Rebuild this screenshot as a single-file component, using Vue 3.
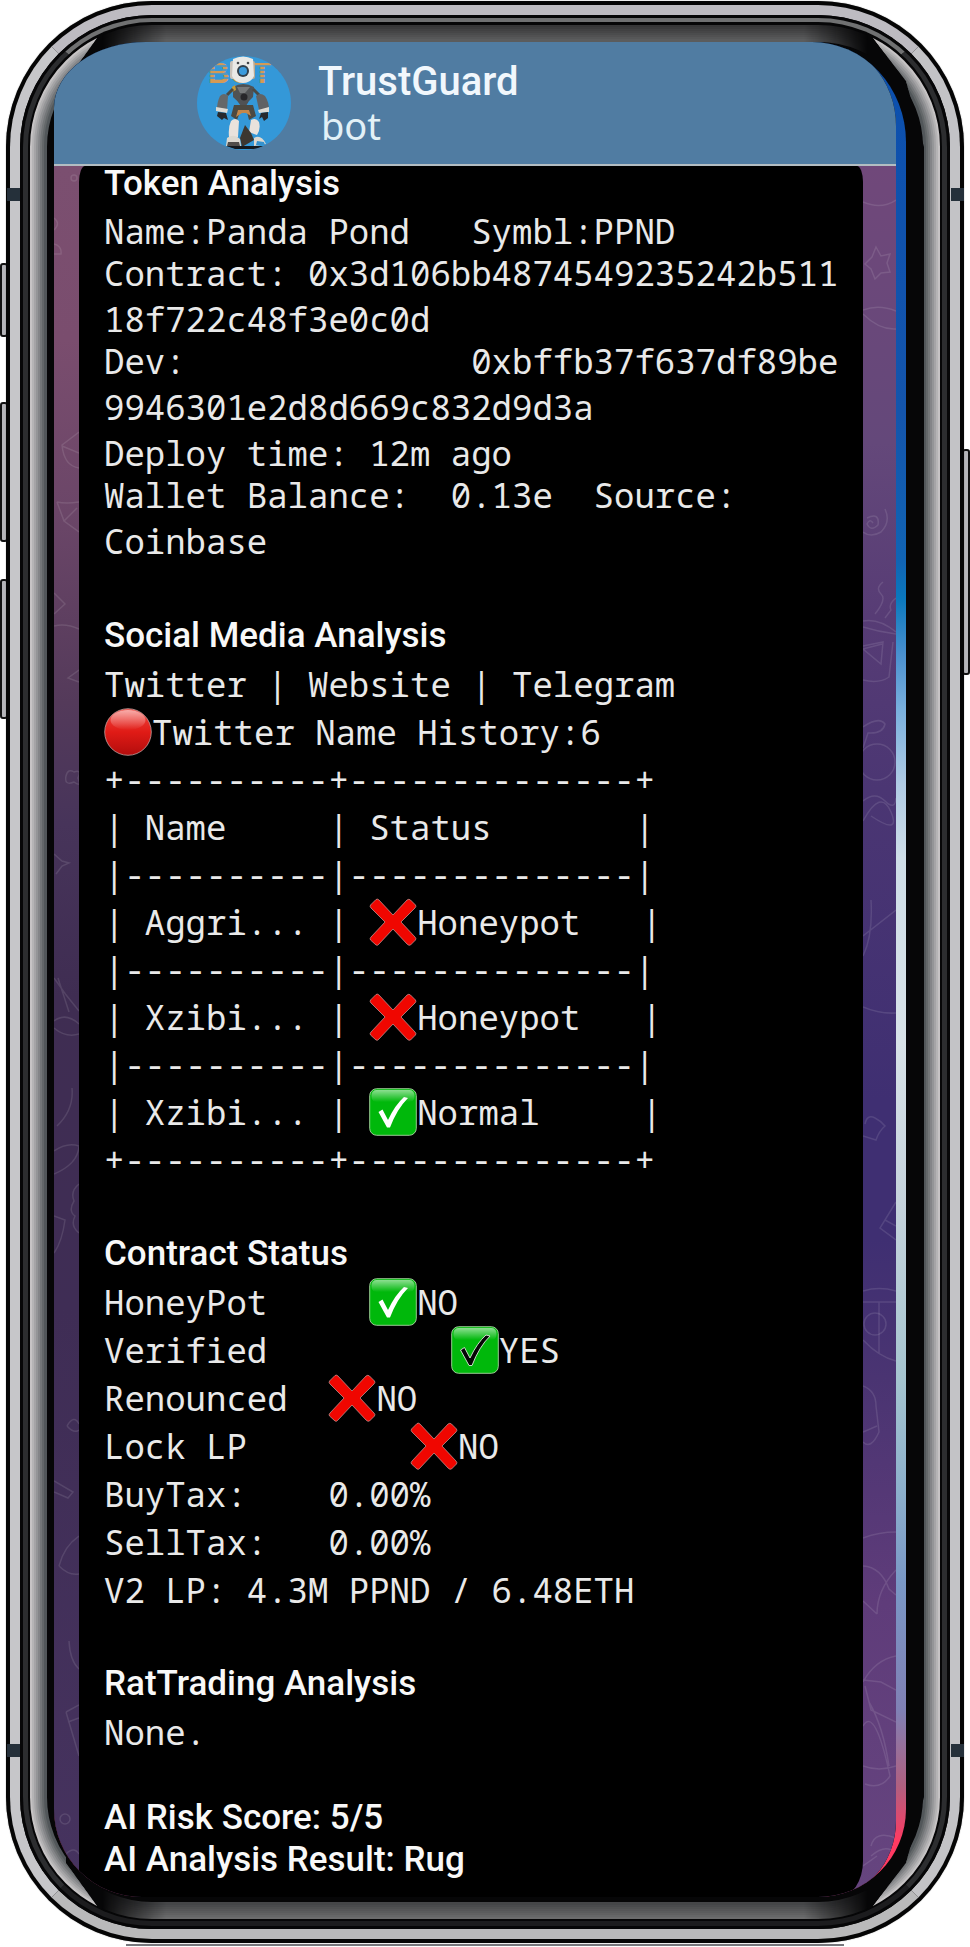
<script setup>
import { h } from 'vue'

const bevelSteps = [0, 1, 2, 3, 4, 5, 6, 7]

const addresses = [
  { label: 'Contract: ', value: '0x3d106bb4874549235242b51118f722c48f3e0c0d' },
  { label: 'Dev:'.padEnd(18), value: '0xbffb37f637df89be9946301e2d8d669c832d9d3a' },
]

const rule = (mark) => [mark + '-'.repeat(10), mark + '-'.repeat(14) + mark]

const history = [
  { name: 'Aggri...', icon: 'cross', status: 'Honeypot' },
  { name: 'Xzibi...', icon: 'cross', status: 'Honeypot' },
  { name: 'Xzibi...', icon: 'check', status: 'Normal' },
]

const checks = [
  { label: 'HoneyPot'.padEnd(13), icon: 'check', value: 'NO' },
  { label: 'Verified'.padEnd(17), icon: 'check-dark', value: 'YES' },
  { label: 'Renounced'.padEnd(11), icon: 'cross', value: 'NO' },
  { label: 'Lock LP'.padEnd(15), icon: 'cross', value: 'NO' },
  { label: 'BuyTax:'.padEnd(11), value: '0.00%' },
  { label: 'SellTax:'.padEnd(11), value: '0.00%' },
]

const svgAttrs = { viewBox: '0 0 48 48', width: 48, height: 48, 'aria-hidden': 'true' }
const tick = 'M9.5 24 L13.5 21.5 L19 32 Q26 17 35 9 L39 10 Q28 21 21 39.5 H18 Z'

function Mark(props) {
  if (props.kind === 'cross') {
    return h('svg', svgAttrs, [
      h('path', {
        d: 'M1.5 7 L7 1.5 Q8.500 .5 10 2 L24 17 L38 2 Q40 .5 41.500 2 L46.500 7 Q47.500 8.500 46 10 L32 24 L46 39 Q47.500 40.500 46.500 42 L41.500 47 Q40 48 38 46 L24 31 L10 46 Q8.500 48 7 47 L1.500 42 Q.5 40.500 2 39 L16 24 L2 10 Q.5 8.500 1.500 7Z',
        fill: '#f00600',
        stroke: '#c9a19d',
        'stroke-width': 0.7,
      }),
    ])
  }
  if (props.kind === 'dot') {
    return h('svg', svgAttrs, [
      h('circle', { cx: 24, cy: 24, r: 23.3, fill: 'url(#dotFill)', stroke: '#c2a09e', 'stroke-width': 0.8 }),
      h('ellipse', { cx: 24, cy: 12, rx: 17.5, ry: 10, fill: 'url(#shine)' }),
    ])
  }
  const dark = props.kind === 'check-dark'
  return h('svg', svgAttrs, [
    h('rect', { x: 0.7, y: 0.7, width: 46.6, height: 46.6, rx: 7, fill: '#00b80b', stroke: '#a8d8a2', 'stroke-width': 0.9 }),
    h('rect', { x: 2.5, y: 2, width: 43, height: 12, rx: 5, fill: 'url(#shine)' }),
    h('path', { d: tick, fill: dark ? '#050505' : '#fff', stroke: dark ? '#d9ead8' : 'none', 'stroke-width': 0.9 }),
  ])
}
Mark.props = ['kind']
</script>

<template>
  <main class="phone">
    <svg class="defs" width="0" height="0" aria-hidden="true">
      <defs>
        <linearGradient id="dotFill" x1="0" y1="0" x2="0" y2="1">
          <stop offset="0" stop-color="#f04a43" />
          <stop offset=".5" stop-color="#e01b16" />
          <stop offset="1" stop-color="#b30d0d" />
        </linearGradient>
        <linearGradient id="shine" x1="0" y1="0" x2="0" y2="1">
          <stop offset="0" stop-color="#fff" stop-opacity=".55" />
          <stop offset="1" stop-color="#fff" stop-opacity="0" />
        </linearGradient>
      </defs>
    </svg>

    <div class="frame" aria-hidden="true">
      <i class="key key-mute"></i>
      <i class="key key-up"></i>
      <i class="key key-down"></i>
      <i class="key key-power"></i>
      <i class="chin"></i>
      <i class="ring ring-edge"></i>
      <i class="ring ring-metal"></i>
      <i class="ring ring-dark"></i>
      <i class="ring ring-glass"></i>
      <i class="band band-top"></i>
      <i class="band band-bottom"></i>
      <div class="bevel bevel-sides">
        <i v-for="n in bevelSteps" :key="n" class="step" :style="{ '--n': n }"></i>
      </div>
      <div class="bevel bevel-ends">
        <i v-for="n in bevelSteps" :key="n" class="step" :style="{ '--n': n }"></i>
      </div>
    </div>

    <div class="screen">
      <div class="chat">
        <header class="bar">
          <svg class="avatar" viewBox="0 0 94 94" width="94" height="94" role="img" aria-label="TrustGuard avatar">
            <defs>
              <clipPath id="disc"><circle cx="47" cy="47" r="47" /></clipPath>
            </defs>
            <g clip-path="url(#disc)">
              <rect width="94" height="94" fill="#3498d8" />
              <text x="11" y="27" class="avatar-text">BOT</text>
              <path d="M8 6H86M8 10H86M8 14H86M8 18H86M8 22H86" stroke="#3498d8" stroke-width="1.6" />
              <rect x="33" y="5" width="5" height="18" rx="2" fill="#c9c3bb" />
              <rect x="53" y="5" width="5" height="18" rx="2" fill="#b9a993" />
              <path d="M36 3Q46 -2 56 3L57 20Q54 27 46 27Q38 27 35 20Z" fill="#e9e9e6" />
              <circle cx="41" cy="7" r="1.300" fill="#45484b" />
              <circle cx="51" cy="7" r="1.300" fill="#45484b" />
              <circle cx="46" cy="15" r="6" fill="#31404c" />
              <circle cx="46" cy="15" r="4" fill="#3c9bdc" />
              <path d="M36 31Q46 25 57 31L56 41Q52 44 49 50H44Q40 44 36 41Z" fill="#505254" />
              <path d="M40 31H53L48 37H43Z" fill="#77797a" />
              <circle cx="47" cy="41" r="3.500" fill="#28272a" />
              <path d="M35 31L38 29L39 34L35 36Z" fill="#c99b34" />
              <path d="M36 33L30 39M56 33L62 39" stroke="#4b4943" stroke-width="3" />
              <path d="M23 40Q27 36 31 40L30 54H20Q20 46 23 40Z" fill="#65686a" />
              <path d="M59 40Q63 36 68 40Q72 46 72 54H62Z" fill="#606264" />
              <path d="M19 51L31 53L30 57L19 55ZM61 54L72 51L72 56L62 57Z" fill="#dedbd4" />
              <path d="M21 56L29 57L31 64L27 62L25 64L20 60ZM64 57L71 56L71 62L67 65L65 61L62 63Z" fill="#27292d" />
              <path d="M37 49H56L59 60L52 64L50 56H43L40 64L34 60Z" fill="#4c4941" />
              <path d="M41 54H52L54 60L49 57H45L39 61Z" fill="#c48749" />
              <path d="M34 65Q38 61 42 65L41 81H32Q31 71 34 65ZM54 64Q59 61 62 66Q64 73 60 79L52 76Z" fill="#e9e2dc" />
              <path d="M48 69L54 77L57 84L45 91L43 82Z" fill="#3c3630" />
              <path d="M30 82Q37 77 43 83L44 90H29ZM57 82Q64 78 69 88L57 90Z" fill="#ddd9d1" />
              <path d="M31 86H42L43 90H30Z" fill="#514d4a" />
              <path d="M60 85L67 86L68 89H59Z" fill="#3692ce" />
              <path d="M29 90H68L60 93H38Z" fill="#15191e" />
            </g>
          </svg>
          <div class="who">
            <h1>TrustGuard</h1>
            <p>bot</p>
          </div>
        </header>

        <div class="wall">
          <svg class="doodle doodle-left" width="25" height="1731" viewBox="0 0 25 1731" aria-hidden="true">
            <circle cx="20" cy="12" r="3" />
            <path d="M0 52Q7 57 0 64M0 78Q8 80 7 88H0M25 266L8 279Q10 300 25 302M8 280L25 287M3 336Q12 338 25 336M3 336L10 355L25 366M10 355L23 342M0 427L11 438L0 448M0 460Q12 457 25 463M25 504L14 512L25 516M12 610Q14 602 20 606Q28 603 24 612Q28 622 20 616Q10 620 12 610M0 688L8 695L15 697L8 700L2 708M0 812Q12 830 25 845M4 812L15 846M0 855Q12 846 25 858M0 862Q12 872 25 868M18 922Q20 944 3 960M0 985Q13 976 25 980Q24 998 0 1008M0 1050L11 1054Q8 1076 0 1087M25 1018Q16 1025 20 1035Q14 1045 21 1050Q16 1060 25 1067M13 1260Q20 1248 25 1258M13 1260Q20 1268 25 1264M0 1315L19 1326L14 1332L0 1326M5 1400Q10 1380 25 1370M5 1400Q15 1410 25 1408M15 1475Q16 1495 25 1503M12 1546L25 1539M12 1546L25 1590M14 1556L25 1552" />
            <circle cx="11" cy="1653" r="5" />
            <path d="M12 1688Q20 1680 25 1688" />
          </svg>
          <svg class="doodle doodle-right" width="33" height="1731" viewBox="0 0 33 1731" aria-hidden="true">
            <path d="M0 36Q18 44 33 34M13 81L18 90L27 88L24 97L27 106L18 107L12 113L8 103L2 98L9 91ZM0 144Q16 138 33 145M0 148Q16 164 33 163M4 352Q17 346 15 359Q8 366 4 358Q7 352 10 357M22 343Q28 356 18 366Q8 372 0 366M20 416Q12 422 18 428Q24 433 12 448M33 432Q25 438 28 444L22 452M0 455Q16 452 33 466M0 461Q16 466 33 468M0 480L20 476L18 498L0 483L19 478M0 514Q16 518 26 511L30 476M0 561Q16 550 22 558Q20 568 5 567L0 582" />
            <circle cx="14" cy="596" r="18" />
            <path d="M0 635Q12 625 22 635T33 632M0 655Q18 622 28 646T8 650M8 734Q10 770 0 790M33 744L0 770M0 841Q16 848 33 847M2 958Q4 948 12 952Q18 955 22 960Q16 965 13 974L0 970M33 1036L17 1062L33 1074M22 1054L33 1060M0 1125Q16 1120 33 1125M0 1136H33M16 1136V1187M0 1174Q16 1191 33 1195M0 1220Q13 1225 13 1240L16 1266Q8 1284 0 1276M0 1266L14 1260M0 1372Q16 1366 33 1366M0 1400Q18 1401 26 1423L33 1429M0 1435L14 1448M14 1448Q14 1424 33 1404M0 1516Q12 1494 33 1490M0 1514L18 1516L33 1524M2 1520L8 1544L33 1556M0 1560Q12 1540 27 1610Q18 1624 2 1618M6 1536Q20 1560 26 1600M0 1600Q16 1606 33 1600M8 1680Q12 1664 33 1672M0 1700L14 1690M8 1690Q20 1680 28 1684" />
            <circle cx="12" cy="1158" r="11" />
          </svg>

          <article class="bubble">
            <section class="token">
              <h2>Token Analysis</h2>
              <div class="entries">
                <p>{{ 'Name:Panda Pond   Symbl:PPND' }}</p>
                <p v-for="a in addresses" :key="a.value" class="hash">{{ a.label + a.value }}</p>
              </div>
              <div class="entries">
                <p>Deploy time: 12m ago</p>
                <p>{{ 'Wallet Balance:  0.13e  Source: Coinbase' }}</p>
              </div>
            </section>

            <section>
              <h2>Social Media Analysis</h2>
              <p><a href="#twitter">Twitter</a> | <a href="#website">Website</a> | <a href="#telegram">Telegram</a></p>
              <p><Mark kind="dot" class="mark" />Twitter Name History:6</p>
              <table>
                <thead>
                  <tr class="rule"><td v-for="c in rule('+')" :key="c">{{ c }}</td></tr>
                  <tr>
                    <th scope="col">{{ '| Name'.padEnd(11) }}</th>
                    <th scope="col">{{ '| Status'.padEnd(15) + '|' }}</th>
                  </tr>
                </thead>
                <tbody>
                  <template v-for="(r, i) in history" :key="i">
                    <tr class="rule"><td v-for="c in rule('|')" :key="c">{{ c }}</td></tr>
                    <tr>
                      <td>{{ '| ' + r.name }}</td>
                      <td>{{ '| ' }}<Mark :kind="r.icon" class="mark" />{{ r.status.padEnd(11) + '|' }}</td>
                    </tr>
                  </template>
                  <tr class="rule"><td v-for="c in rule('+')" :key="c">{{ c }}</td></tr>
                </tbody>
              </table>
            </section>

            <section>
              <h2>Contract Status</h2>
              <p v-for="c in checks" :key="c.label">{{ c.label }}<Mark v-if="c.icon" :kind="c.icon" class="mark" />{{ c.value }}</p>
              <p>V2 LP: 4.3M PPND / 6.48ETH</p>
            </section>

            <section>
              <h2>RatTrading Analysis</h2>
              <p>None.</p>
            </section>

            <section class="verdict">
              <h2>AI Risk Score: 5/5</h2>
              <h2>AI Analysis Result: Rug</h2>
            </section>
          </article>
        </div>
      </div>
    </div>
  </main>
</template>

<style>
body {
  background: #fff;
}
</style>

<style scoped>
.phone {
  position: relative;
  margin: 1px 6px 4px;
  padding: 41px 58px 46px 48px;
}
.defs {
  position: absolute;
}
.frame,
.frame i,
.bevel {
  position: absolute;
}
.frame,
.bevel {
  inset: 0;
}
.frame i {
  box-sizing: border-box;
}
.ring-edge {
  inset: 0;
  border-radius: 146px;
  background: #050505;
  box-shadow: 0 0 1px #555;
}
.ring-metal {
  inset: 4px;
  border: 10px solid #c6c6c9;
  border-top-color: #bdbbc1;
  border-right-color: #c3c3c6;
  border-bottom-color: #b9b9ba;
  border-radius: 142px;
}
.ring-dark {
  inset: 14px;
  border-radius: 132px;
  background: #060607;
}
.ring-glass {
  inset: 17px;
  border: 5px solid #2c2d2f;
  border-top: 4px solid #707172;
  border-bottom-color: #1c1c1e;
  border-radius: 129px;
}
.chin {
  right: 120px;
  bottom: -3px;
  left: 120px;
  height: 2px;
  background: #77777c;
}
.band {
  left: 1px;
  right: 0;
  height: 13px;
  border: solid #25303a;
  border-width: 0 13px;
}
.band-top {
  top: 187px;
}
.band-bottom {
  bottom: 186px;
}
.key {
  width: 8px;
  border: 2px solid #111;
  border-radius: 3px;
  background: #b5b5b9;
}
.key-mute,
.key-up,
.key-down {
  left: -6px;
}
.key-mute {
  top: 262px;
  height: 74px;
}
.key-up {
  top: 401px;
  height: 140px;
}
.key-down {
  top: 578px;
  height: 140px;
}
.key-power {
  top: 448px;
  right: -6px;
  height: 226px;
}
.step {
  --t: calc(var(--n) * 14%);
  inset: calc(24px + var(--n) * 2px);
  border-radius: calc(122px - var(--n) * 2px);
  border: 3px solid;
}
.bevel-sides {
  clip-path: polygon(
    0 0,
    100% 0,
    100% 100%,
    calc(100% - 91px) 100%,
    calc(100% - 91px) calc(100% - 37px),
    calc(100% - 58px) calc(100% - 80px),
    calc(100% - 40px) calc(100% - 146px),
    calc(100% - 40px) 146px,
    calc(100% - 58px) 80px,
    calc(100% - 91px) 37px,
    calc(100% - 91px) 0,
    91px 0,
    91px 37px,
    60px 80px,
    60px calc(100% - 80px),
    91px calc(100% - 37px),
    91px 100%,
    0 100%
  );
}
.bevel-sides .step {
  border-color: color-mix(in srgb, #505558 var(--t), #c6c3c4);
}
.bevel-ends {
  -webkit-mask-image: linear-gradient(90deg, transparent 96px, #000 160px, #000 calc(100% - 160px), transparent calc(100% - 96px));
  mask-image: linear-gradient(90deg, transparent 96px, #000 160px, #000 calc(100% - 160px), transparent calc(100% - 96px));
}
.bevel-ends .step {
  border-top-color: color-mix(in srgb, #5c5d5e var(--t), #363637);
  border-bottom-color: color-mix(in srgb, #444547 var(--t), #6c6c6d);
}
.screen {
  position: relative;
  padding-right: 10px;
  overflow: hidden;
  border-radius: 92px 94px 88px 88px / 66px 100px 88px 88px;
  background: linear-gradient(
    #0b4fae 0,
    #1455ac 20%,
    #1164b4 28%,
    #0a78bd 30%,
    #4a90cf 33%,
    #7ab0de 36%,
    #b0cbe4 40%,
    #cfdee8 44%,
    #d8e2e8 54%,
    #c5d3dc 63%,
    #a6c5d0 72%,
    #8db0cc 78%,
    #7a98c6 83%,
    #8080b4 90%,
    #b06080 94%,
    #ff3a62 97%
  );
}
.chat {
  overflow: hidden;
  border-radius: 0 76px 68px 0 / 0 84px 76px 0;
  background: #000;
}
.bar {
  display: flex;
  align-items: center;
  gap: 27px;
  height: 122px;
  padding-left: 143px;
  border-bottom: 2px solid #b3bdc2;
  background: #507ca2;
}
.avatar {
  flex: none;
}
.avatar-text {
  font: bold 30px 'Liberation Sans', sans-serif;
  fill: #d49a55;
}
.who h1 {
  margin: 0;
  color: #f1f7fc;
  font: 500 40px/44px Roboto, sans-serif;
}
.who p {
  margin: 0;
  padding-left: 3px;
  color: #e3f1f7;
  font: 400 38px/42px 'Noto Sans', sans-serif;
}
.wall {
  position: relative;
  padding: 0 33px 0 25px;
  background:
    linear-gradient(#7b4f70, #7a4d6e 10%, #6b4668 20%, #543a5a 31%, #47345a 38%, #3f2d52 48%, #3f2d55 66%, #46335f) left / 50% 100% no-repeat,
    linear-gradient(#70487a, #64487a 16%, #573c75 26%, #4b3673 36%, #3f2f72 54%, #3f2f72 62%, #4a3472 70%, #5f3c7a 83%, #66457f) right / 50% 100% no-repeat;
}
.doodle {
  position: absolute;
  top: 0;
  fill: none;
  stroke: #fff;
  stroke-opacity: 0.11;
  stroke-width: 1.5;
}
.doodle-left {
  left: 0;
}
.doodle-right {
  right: 0;
}
.bubble {
  position: relative;
  display: flex;
  flex-direction: column;
  gap: 46px;
  padding: 0 19px 16px 25px;
  border-radius: 6px 6px 24px 0 / 16px 16px 36px 0;
  background: #000;
  color: #e9e9e9;
  font: 400 34px/48px 'Noto Sans Mono', 'DejaVu Sans Mono', monospace;
}
.bubble p {
  margin: 0;
  white-space: pre-wrap;
}
.bubble h2 {
  margin: 0;
  color: #f8f8f8;
  font: 500 35px/48px Roboto, sans-serif;
}
.bubble a {
  color: inherit;
  text-decoration: none;
}
.bubble .token {
  padding-bottom: 2px;
}
.bubble .token h2 {
  margin-bottom: 6px;
  line-height: 36px;
}
.entries {
  line-height: 46px;
}
.entries p + p {
  margin-top: -4px;
}
.hash {
  word-break: break-all;
}
.mark {
  margin: -4px 0;
  vertical-align: -7px;
}
table {
  margin-bottom: 1px;
  border-collapse: collapse;
}
th,
td {
  padding: 0;
  font-weight: 400;
  text-align: left;
  white-space: pre;
}
.rule td {
  line-height: 47px;
}
.verdict {
  margin-top: -5px;
}
.bubble .verdict h2 {
  line-height: 42px;
}
</style>
